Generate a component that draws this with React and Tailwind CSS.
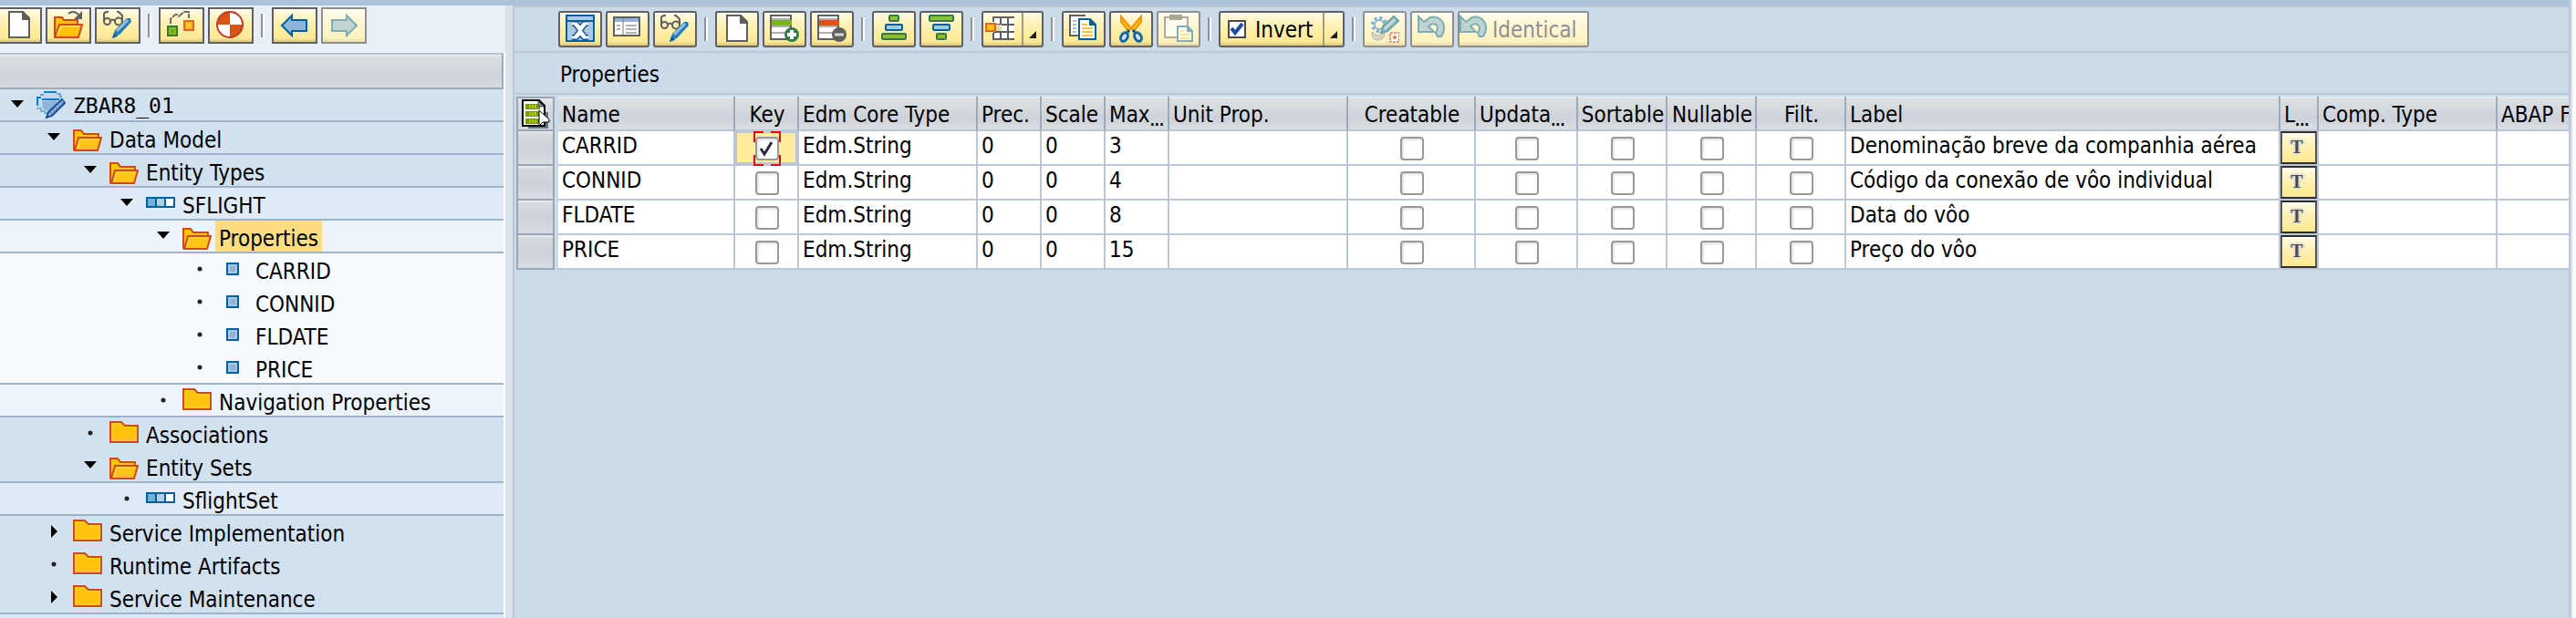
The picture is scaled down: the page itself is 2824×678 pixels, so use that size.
import React from "react";

const FONT = "font-['DejaVu_Sans_Condensed','DejaVu_Sans',sans-serif]";

/* ---------- icons ---------- */

function Icon({ children, className = "" }) {
  return (
    <svg viewBox="0 0 32 32" className={"block h-8 w-8 shrink-0 " + className} aria-hidden="true">
      {children}
    </svg>
  );
}

const NewIcon = () => (
  <Icon>
    <path d="M5 1H20L27 8V29H5Z" fill="#fff" stroke="#5f5f5f" strokeWidth="2" />
    <path d="M19 0H20L28 8V10H19Z" fill="#5f5f5f" />
  </Icon>
);

const OpenIcon = () => (
  <Icon>
    <path d="M1 29V7H9L11 10H26V14" fill="#ffc20e" stroke="#d3491b" strokeWidth="2" />
    <path d="M1 29L6 15H31L27 29Z" fill="#ffc20e" stroke="#d3491b" strokeWidth="2" />
    <path d="M4 26L8 17H28" fill="none" stroke="#ffd95a" strokeWidth="2" />
    <path d="M16 3C20 0 24 1 27 4" fill="none" stroke="#5f5f5f" strokeWidth="2" />
    <path d="M31 0V9H22Z" fill="#5f5f5f" />
  </Icon>
);

const GlassesPencilIcon = () => (
  <Icon>
    <g fill="none" stroke="#5f5f5f" strokeWidth="2">
      <circle cx="4.500" cy="11.500" r="3.500" />
      <circle cx="17" cy="11.500" r="4" />
      <path d="M8 11Q10.500 8 13 11M1 11V4Q1 1 5 1H6M21 11V5L17 1H15" />
    </g>
    <path d="M10 30L13 21L26 8H30L31 12L18 26Z" fill="#2b7cb5" />
    <path d="M15 22L27 10" stroke="#8fc0e4" strokeWidth="3" />
    <path d="M10 30L12 24L16 28Z" fill="#0e5f98" />
  </Icon>
);

const StructureIcon = () => (
  <Icon>
    <rect x="1" y="17" width="10" height="10" fill="#86bc25" stroke="#357a38" strokeWidth="2" />
    <rect x="4" y="20" width="4" height="4" fill="#6aa800" />
    <rect x="19" y="11" width="10" height="10" fill="#ffb81c" stroke="#e0662a" strokeWidth="2" />
    <rect x="22" y="14" width="4" height="4" fill="#ffcf30" />
    <path d="M4 14V9L9 4H11L13 6L19 1H24V8" fill="none" stroke="#6a6a6a" strokeWidth="2" strokeDasharray="7 1" />
  </Icon>
);

const WheelIcon = () => (
  <Icon>
    <circle cx="15" cy="15" r="14" fill="#d95514" />
    <path d="M15 15V1A14 14 0 0 1 29 15ZM15 15V29A14 14 0 0 1 1 15Z" fill="#fff" />
    <circle cx="15" cy="15" r="14" fill="none" stroke="#c0392b" strokeWidth="2" />
  </Icon>
);

const BackIcon = () => (
  <Icon>
    <path d="M2 16L13 5V10H29V22H13V27Z" fill="#8fb4d9" stroke="#00609c" strokeWidth="2" />
  </Icon>
);

const ForwardIcon = () => (
  <Icon>
    <path d="M30 16L19 5V10H3V22H19V27Z" fill="#c3d3d3" stroke="#7fadb5" strokeWidth="2" />
  </Icon>
);

const SumIcon = () => (
  <Icon>
    <rect x="1" y="1" width="30" height="28" fill="#a9cbe7" stroke="#00609c" strokeWidth="2" />
    <path d="M1 7H31" stroke="#00609c" strokeWidth="2" />
    <path d="M7 10H12L16 15L20 10H25M7 25H12L16 20L20 25H25M11 11L21 24M21 11L11 24" fill="none" stroke="#1b4f96" strokeWidth="6" />
    <path d="M7 10H12L16 15L20 10H25M7 25H12L16 20L20 25H25M11 11L21 24M21 11L11 24" fill="none" stroke="#fff" strokeWidth="3" />
  </Icon>
);

const DetailIcon = () => (
  <Icon>
    <rect x="1" y="3" width="28" height="20" fill="#fff" stroke="#5f5f5f" strokeWidth="2" />
    <rect x="2" y="4" width="26" height="4" fill="#8fb4e0" />
    <path d="M11 4V22" stroke="#777" strokeWidth="1" />
    <path d="M4 12H8M4 16H8M14 12H26M14 16H26M14 20H26" stroke="#b0b0b0" strokeWidth="2" />
  </Icon>
);

function RowIcon({ color, minus = false }) {
  return (
    <Icon>
      <path d="M1 1H23V27H1Z" fill="#fff" stroke="#5f5f5f" strokeWidth="2" />
      <path d="M1 5H23M1 13H23M1 20H23" stroke="#5f5f5f" strokeWidth="1" />
      <rect x="2" y="6" width="22" height="6" fill={color} />
      <circle cx="24" cy="22" r="7" fill={minus ? "#5f5f5f" : "#35794a"} stroke={minus ? "#5f5f5f" : "#2f7d45"} strokeWidth="2" />
      <path d={minus ? "M19 22H29" : "M19 22H29M24 17V27"} stroke={minus ? "#d5d5d5" : "#fff"} strokeWidth={minus ? 3 : 4} />
    </Icon>
  );
}

const SortUpIcon = () => (
  <Icon>
    <rect x="11" y="1" width="10" height="6" rx="1" fill="#8cc02b" stroke="#35794a" strokeWidth="2" />
    <rect x="7" y="11" width="18" height="6" rx="1" fill="#a9c6e4" stroke="#00609c" strokeWidth="2" />
    <rect x="3" y="21" width="26" height="6" rx="1" fill="#8cc02b" stroke="#35794a" strokeWidth="2" />
  </Icon>
);

const SortDownIcon = () => (
  <Icon>
    <rect x="3" y="1" width="26" height="6" rx="1" fill="#8cc02b" stroke="#35794a" strokeWidth="2" />
    <rect x="7" y="11" width="18" height="6" rx="1" fill="#a9c6e4" stroke="#00609c" strokeWidth="2" />
    <rect x="11" y="21" width="10" height="6" rx="1" fill="#8cc02b" stroke="#35794a" strokeWidth="2" />
  </Icon>
);

const LayoutIcon = () => (
  <Icon>
    <rect x="8" y="3" width="24" height="24" fill="#fff" />
    <path d="M9 8V3H32M32 27H9V20M17 3V27M25 3V27M9 11H32M9 19H32" fill="none" stroke="#5f5f5f" strokeWidth="2" />
    <rect x="10" y="11" width="8" height="7" fill="#e8d9a8" />
    <rect x="1" y="10" width="10" height="8" fill="#ffc20e" stroke="#e0662a" strokeWidth="2" />
  </Icon>
);

const CopyIcon = () => (
  <Icon>
    <path d="M18 1H1V23H10" fill="#fff" stroke="#5f5f5f" strokeWidth="2" />
    <path d="M4 7H8M4 11H8M4 15H8M4 19H8" stroke="#b8b8b8" strokeWidth="2" />
    <path d="M11 5H23L29 11V27H11Z" fill="#fff" stroke="#00609c" strokeWidth="2" />
    <path d="M22 4L30 12H22Z" fill="#00609c" />
    <path d="M14 11H20M14 15H26M14 19H26M14 23H26" stroke="#fdc82f" strokeWidth="2" />
  </Icon>
);

const CutIcon = () => (
  <Icon>
    <path d="M5 2V8L13 18L16 15ZM27 2V8L19 18L16 15Z" fill="#ffc20e" stroke="#f09010" strokeWidth="2" />
    <path d="M14 17L10 22M18 17L22 22" stroke="#00609c" strokeWidth="3" />
    <ellipse cx="8.500" cy="24.500" rx="3.500" ry="5" transform="rotate(30 8.500 24.500)" fill="#d5e6f2" stroke="#1468a4" strokeWidth="3" />
    <ellipse cx="23.500" cy="24.500" rx="3.500" ry="5" transform="rotate(-30 23.500 24.500)" fill="#d5e6f2" stroke="#1468a4" strokeWidth="3" />
  </Icon>
);

const PasteIcon = () => (
  <Icon>
    <path d="M1 3H26V25H1Z" fill="#fffdf0" stroke="#b2ac9c" strokeWidth="2" />
    <rect x="6" y="0" width="14" height="6" fill="#aaa695" />
    <path d="M15 13H26L31 18V29H15Z" fill="#fffbe6" stroke="#7fadb5" strokeWidth="2" />
    <path d="M25 12L32 19H25Z" fill="#7fadb5" />
    <path d="M18 18H22M18 22H28M18 26H28" stroke="#fce38f" strokeWidth="2" />
  </Icon>
);

const InvertIcon = () => (
  <svg viewBox="0 0 20 20" className="block h-5 w-5 shrink-0" aria-hidden="true">
    <rect x="1" y="1" width="18" height="18" fill="#fff" stroke="#4a4a4a" strokeWidth="2" />
    <path d="M4 9L8 14L16 4" fill="none" stroke="#1d4fa0" strokeWidth="4" />
  </svg>
);

const DropIcon = () => (
  <svg viewBox="0 0 8 8" className="mt-3 block h-2 w-2" aria-hidden="true">
    <path d="M8 0V8H0Z" fill="#1d1d26" />
  </svg>
);

const GearPencilIcon = () => (
  <Icon>
    <circle cx="10" cy="11" r="7" fill="none" stroke="#7ab0cc" strokeWidth="4" strokeDasharray="3 2.500" />
    <circle cx="10" cy="11" r="5" fill="none" stroke="#8bbacb" strokeWidth="2" />
    <path d="M2 19Q8 26 16 20Q16 28 8 28Q1 28 2 19Z" fill="#d6d3c0" stroke="#b8b5a4" strokeWidth="1" />
    <path d="M12 20L14 13L26 2L31 7L19 18Z" fill="#9ec3c6" stroke="#6ba3ad" strokeWidth="2" />
    <path d="M16 16L27 5" stroke="#c8dcd8" strokeWidth="2" />
    <rect x="22" y="20" width="10" height="10" fill="#fff" stroke="#e89878" strokeWidth="2" strokeDasharray="3 1" />
    <path d="M27 23V27M25 25H29" stroke="#e07858" strokeWidth="2" />
  </Icon>
);

const UndoIcon = () => (
  <Icon>
    <path d="M1 2V19H18L12 13Q16 9 20 11Q24 14 20 20L22 24H26Q31 17 28 9Q23 1 14 3L7 8Z" fill="#bfd3d0" stroke="#7fadb5" strokeWidth="2" />
  </Icon>
);

const FolderOpen = () => (
  <svg viewBox="0 0 32 24" className="mt-2 block h-6 w-8" aria-hidden="true">
    <path d="M1 23V1H9L12 5H28V9" fill="#ffc20e" stroke="#cf4a1c" strokeWidth="2" />
    <path d="M2 23L6 9H31L27 23Z" fill="#ffc516" stroke="#cf4a1c" strokeWidth="2" />
    <path d="M5 21L8 11H28" fill="none" stroke="#ffdc66" strokeWidth="1" />
  </svg>
);

const FolderClosed = () => (
  <svg viewBox="0 0 32 24" className="mt-1 block h-6 w-8" aria-hidden="true">
    <path d="M1 23V1H13L17 5H31V23Z" fill="#ffc20e" stroke="#cf4a1c" strokeWidth="2" />
    <path d="M3 21V3H12L16 7H29V21Z" fill="none" stroke="#ffd23c" strokeWidth="1" />
  </svg>
);

const EntityIcon = () => (
  <svg viewBox="0 0 32 12" className="mt-2.5 block h-3 w-8" aria-hidden="true">
    <rect x="1" y="1" width="10" height="10" fill="#6db0d8" />
    <rect x="11" y="1" width="10" height="10" fill="#b4cde6" />
    <rect x="21" y="1" width="10" height="10" fill="#fff" />
    <path d="M1 1H31V11H1ZM11 1V11M21 1V11" fill="none" stroke="#00609c" strokeWidth="2" />
  </svg>
);

const FieldIcon = () => (
  <svg viewBox="0 0 14 14" className="mt-2.5 ml-2 block h-3.5 w-3.5" aria-hidden="true">
    <rect x="1" y="1" width="12" height="12" fill="#abc6e2" stroke="#00609c" strokeWidth="2" />
    <rect x="4" y="4" width="6" height="6" fill="#8fb2d8" />
  </svg>
);

const ServiceIcon = () => (
  <svg viewBox="0 0 32 32" className="mt-0.5 block h-8 w-8" aria-hidden="true">
    <path d="M2 7L6 3Q14 0 24 3L28 7L27 12L14 25L6 22L2 17Z" fill="#c3daee" />
    <path d="M6 11L22 10L23 13L13 22L7 19Z" fill="#8fb4dc" />
    <path d="M1 16V7H5" fill="none" stroke="#0a83c6" strokeWidth="2" />
    <path d="M1 18V19H5V22H9V24H12" fill="none" stroke="#7fb3cc" strokeWidth="2" />
    <path d="M8 1H22M6 9H25" fill="none" stroke="#0a83c6" strokeWidth="2" />
    <path d="M4 4H8M22 3H26V6H28" fill="none" stroke="#6fa9c8" strokeWidth="2" />
    <path d="M11 29L13 23L28 9L31 13L17 27Z" fill="#6a94c8" stroke="#1b4f96" strokeWidth="2" />
    <path d="M14 26L29 11" stroke="#a8c4e4" strokeWidth="2" strokeDasharray="2 2" />
  </svg>
);

const SelectAllIcon = () => (
  <svg viewBox="0 0 32 32" className="block h-8 w-8" aria-hidden="true">
    <path d="M28 14V30H8" fill="none" stroke="#5e7488" strokeWidth="4" />
    <path d="M2 1H20L26 7V29H2Z" fill="#fff" stroke="#000" strokeWidth="2" />
    <rect x="5" y="5" width="16" height="6" fill="#7a9a00" />
    <rect x="5" y="13" width="16" height="6" fill="#7a9a00" />
    <rect x="5" y="21" width="16" height="6" fill="#7a9a00" />
    <path d="M9 8H17M9 16H17M9 24H17" stroke="#a5cc14" strokeWidth="4" strokeDasharray="2 1" />
    <path d="M19 2V8H25Z" fill="#7c8a96" stroke="#4a5560" strokeWidth="1" />
    <path d="M20 12V29L24 25H31V22Z" fill="#fff" stroke="#000" strokeWidth="1" />
  </svg>
);

/* ---------- toolbars ---------- */

const BTN_FILL =
  "bg-[linear-gradient(to_bottom,#fffdf0_0px,#fff6cc_6px,#fff0b0_16px,#ffec9a_26px,#fbe896_32px,#d5c67e_36px)]";
const BTN_FILL_OFF =
  "bg-[linear-gradient(to_bottom,#fffef6_0px,#fffae0_6px,#fff6d2_16px,#fff3c4_26px,#fdf2c2_32px,#e2d9a8_36px)]";

function ToolButton({ label, off = false, wide = false, children }) {
  return (
    <button
      type="button"
      aria-label={label}
      disabled={off}
      className={
        "flex h-10 shrink-0 items-center justify-center border-2 " +
        (wide ? "w-[50px] " : "w-12 rounded-[3px] ") +
        (off ? "border-[#8f8f8f] " + BTN_FILL_OFF : "border-[#5f5f64] " + BTN_FILL)
      }
    >
      {children}
    </button>
  );
}

const Sep = () => (
  <span className="mx-1 h-[26px] w-1 shrink-0 border-r-2 border-l-2 border-l-[#8f9298] border-r-white" />
);

function LeftToolbar() {
  return (
    <div className="flex h-[52px] items-start gap-1 overflow-hidden bg-[#e8eff6] pt-0.5">
      <div className="-ml-1">
        <ToolButton wide label="New"><NewIcon /></ToolButton>
      </div>
      <ToolButton wide label="Open"><OpenIcon /></ToolButton>
      <ToolButton wide label="Display or change"><GlassesPencilIcon /></ToolButton>
      <span className="flex h-10 items-center"><Sep /></span>
      <ToolButton wide label="Structure"><StructureIcon /></ToolButton>
      <ToolButton wide label="Generate"><WheelIcon /></ToolButton>
      <span className="flex h-10 items-center"><Sep /></span>
      <ToolButton wide label="Back"><BackIcon /></ToolButton>
      <ToolButton wide off label="Forward"><ForwardIcon /></ToolButton>
    </div>
  );
}

function RightToolbar() {
  return (
    <div className="flex h-[52px] items-center gap-1 border-y-2 border-[#bcc8d6] pl-12">
      <ToolButton label="Totals"><SumIcon /></ToolButton>
      <ToolButton label="Details"><DetailIcon /></ToolButton>
      <ToolButton label="Display or change"><GlassesPencilIcon /></ToolButton>
      <Sep />
      <ToolButton label="Create"><NewIcon /></ToolButton>
      <ToolButton label="Insert row"><RowIcon color="#7ab51d" /></ToolButton>
      <ToolButton label="Delete row"><RowIcon color="#d95514" minus /></ToolButton>
      <Sep />
      <ToolButton label="Sort ascending"><SortUpIcon /></ToolButton>
      <ToolButton label="Sort descending"><SortDownIcon /></ToolButton>
      <Sep />
      <button
        type="button"
        aria-label="Choose layout"
        className={"flex h-10 w-[68px] shrink-0 items-center rounded-[3px] border-2 border-[#5f5f64] pl-0.5 " + BTN_FILL}
      >
        <LayoutIcon />
        <span className="ml-2 flex h-full flex-1 items-center justify-center border-l-2 border-[#a39c78]">
          <DropIcon />
        </span>
      </button>
      <Sep />
      <ToolButton label="Copy"><CopyIcon /></ToolButton>
      <ToolButton label="Cut"><CutIcon /></ToolButton>
      <ToolButton off label="Paste"><PasteIcon /></ToolButton>
      <Sep />
      <button
        type="button"
        className={"flex h-10 w-[138px] shrink-0 items-center rounded-[3px] border-2 border-[#5f5f64] pl-2 " + BTN_FILL}
      >
        <InvertIcon />
        <span className="ml-2.5 pt-0.5 leading-9">Invert</span>
        <span className="ml-auto flex h-full w-[22px] items-center justify-center border-l-2 border-[#a39c78]">
          <DropIcon />
        </span>
      </button>
      <Sep />
      <ToolButton off label="Adjust"><GearPencilIcon /></ToolButton>
      <ToolButton off label="Undo"><UndoIcon /></ToolButton>
      <button
        type="button"
        disabled
        className={"flex h-10 w-36 shrink-0 items-center rounded-[3px] border-2 border-[#8f8f8f] text-[#8f8f98] " + BTN_FILL_OFF}
      >
        <UndoIcon />
        <span className="ml-1 pt-0.5 leading-9">Identical</span>
      </button>
    </div>
  );
}

/* ---------- tree ---------- */

const TREE = [
  { level: 0, state: "open", icon: "service", text: "ZBAR8_01", mono: true, line: true },
  { level: 1, state: "open", icon: "open", text: "Data Model", line: true },
  { level: 2, state: "open", icon: "open", text: "Entity Types", line: true },
  { level: 3, state: "open", icon: "entity", text: "SFLIGHT", line: true },
  { level: 4, state: "open", icon: "open", text: "Properties", line: true, selected: true },
  { level: 5, state: "leaf", icon: "field", text: "CARRID" },
  { level: 5, state: "leaf", icon: "field", text: "CONNID" },
  { level: 5, state: "leaf", icon: "field", text: "FLDATE" },
  { level: 5, state: "leaf", icon: "field", text: "PRICE", line: true },
  { level: 4, state: "leaf", icon: "closed", text: "Navigation Properties", line: true },
  { level: 2, state: "leaf", icon: "closed", text: "Associations" },
  { level: 2, state: "open", icon: "open", text: "Entity Sets", line: true },
  { level: 3, state: "leaf", icon: "entity", text: "SflightSet", line: true },
  { level: 1, state: "closed", icon: "closed", text: "Service Implementation" },
  { level: 1, state: "leaf", icon: "closed", text: "Runtime Artifacts" },
  { level: 1, state: "closed", icon: "closed", text: "Service Maintenance", line: true },
];

const INDENT = ["pl-0", "pl-10", "pl-20", "pl-[120px]", "pl-40", "pl-[200px]"];
const LEVEL_BG = ["bg-[#d2e1f0]", "bg-[#d2e1f0]", "bg-[#d2e1f0]", "bg-[#e1ebf7]", "bg-[#ecf3fb]", "bg-[#f7faff]"];
const TREE_ICONS = {
  service: ServiceIcon,
  open: FolderOpen,
  closed: FolderClosed,
  entity: EntityIcon,
  field: FieldIcon,
};

function Expander({ state }) {
  return (
    <svg viewBox="0 0 40 36" className="block h-9 w-10 shrink-0" aria-hidden="true">
      {state === "open" && <path d="M12 12H26L19 20Z" fill="#000" />}
      {state === "closed" && <path d="M16 10V24L23 17Z" fill="#000" />}
      {state === "leaf" && <circle cx="19" cy="17" r="2.500" fill="#222" />}
    </svg>
  );
}

function TreeRow({ row }) {
  const Glyph = TREE_ICONS[row.icon];
  return (
    <li
      className={
        "flex h-9 items-start overflow-hidden border-b-2 " +
        INDENT[row.level] + " " + LEVEL_BG[row.level] + " " +
        (row.line ? "border-[#9fb3c8]" : "border-transparent")
      }
    >
      <Expander state={row.state} />
      <span className="w-9 shrink-0"><Glyph /></span>
      <span
        className={
          "h-[34px] px-1 pt-0.5 whitespace-nowrap " +
          (row.mono ? "font-['DejaVu_Sans_Mono',monospace] text-[23px] leading-8 " : "leading-9 ") +
          (row.selected ? "bg-[#fddc82]" : "")
        }
      >
        {row.text}
      </span>
    </li>
  );
}

function TreePanel() {
  return (
    <aside className="flex w-[554px] shrink-0 flex-col bg-[#dae6f3]">
      <LeftToolbar />
      <div className="flex-1 border-r-2 border-white">
        <div className="h-10 border-t-2 border-r-2 border-b-2 border-t-[#b9c5d2] border-r-[#9dabb9] border-b-[#9dabb9] bg-[linear-gradient(to_bottom,#eef0f2_0px,#d9dde0_3px,#d3d9dc_16px,#cdd2dc_20px,#d0d5dd_28px,#d9dde2_36px)]" />
        <ul>
          {TREE.map((row) => (
            <TreeRow key={row.text} row={row} />
          ))}
        </ul>
      </div>
    </aside>
  );
}

/* ---------- table ---------- */

const HEAD_FILL =
  "bg-[linear-gradient(to_bottom,#eef0f2_0px,#e0e3e6_2px,#d8dde1_6px,#d3d9dc_16px,#cdd2dc_22px,#d0d6dc_28px,#dadfe4_36px)]";

const COLUMNS = [
  { name: "Name", w: "w-[194px]" },
  { name: "Key", w: "w-[70px]", box: true },
  { name: "Edm Core Type", w: "w-[196px]" },
  { name: "Prec.", w: "w-[70px]" },
  { name: "Scale", w: "w-[70px]" },
  { name: "Max", w: "w-[70px]", cut: true },
  { name: "Unit Prop.", w: "w-[196px]" },
  { name: "Creatable", w: "w-[140px]", box: true },
  { name: "Updata", w: "w-[112px]", cut: true, box: true },
  { name: "Sortable", w: "w-[98px]", box: true },
  { name: "Nullable", w: "w-[98px]", box: true },
  { name: "Filt.", w: "w-[98px]", box: true },
  { name: "Label", w: "w-[476px]" },
  { name: "L", w: "w-[42px]", cut: true },
  { name: "Comp. Type", w: "w-[196px]" },
  { name: "ABAP F", w: "" },
];

const ROWS = [
  { name: "CARRID", key: true, max: "3", label: "Denominação breve da companhia aérea" },
  { name: "CONNID", key: false, max: "4", label: "Código da conexão de vôo individual" },
  { name: "FLDATE", key: false, max: "8", label: "Data do vôo" },
  { name: "PRICE", key: false, max: "15", label: "Preço do vôo" },
];

function Cell({ children }) {
  return (
    <td className="overflow-hidden border-r-2 border-b-2 border-[#bcc7d6] bg-white p-0 pl-1 align-top leading-8 whitespace-nowrap last:border-r-0">
      {children}
    </td>
  );
}

function BoxCell({ label, checked = false, active = false }) {
  return (
    <td className={"border-r-2 border-b-2 border-[#bcc7d6] p-0 align-top " + (active ? "bg-[#ffed9e] shadow-[inset_0_0_0_2px_#bcc7d6]" : "bg-white")}>
      <div className="relative flex h-9 justify-center pt-1.5 pl-0.5">
        <input
          type="checkbox"
          aria-label={label}
          defaultChecked={checked}
          className="h-[26px] w-[26px] appearance-none rounded-[4px] border-2 border-[#979999] bg-white shadow-[inset_2px_2px_2px_#e4e4e6]"
        />
        {active && (
          <svg viewBox="0 0 30 38" className="pointer-events-none absolute top-0 h-[38px] w-[30px]" aria-hidden="true">
            <path d="M1 12V1H11M19 1H29V12M29 26V37H19M11 37H1V26" fill="none" stroke="#e30613" strokeWidth="2" />
            <path d="M8 19L12 25L20 12" fill="none" stroke="#2e2a45" strokeWidth="3" />
          </svg>
        )}
      </div>
    </td>
  );
}

function PropertyTable() {
  return (
    <table className="w-full table-fixed border-separate border-spacing-0">
      <colgroup>
        <col className="w-[46px]" />
        {COLUMNS.map((c) => (
          <col key={c.name} className={c.w} />
        ))}
      </colgroup>
      <thead>
        <tr className="h-[38px]">
          <th className="p-0 pr-1">
            <button
              type="button"
              aria-label="Select all"
              className={"flex h-[38px] w-full items-center justify-center border-2 border-[#9aa6b5] " + HEAD_FILL}
            >
              <SelectAllIcon />
            </button>
          </th>
          {COLUMNS.map((c) => (
            <th
              key={c.name}
              className={
                "overflow-hidden border-r-2 border-b-2 border-r-[#9eaab8] border-b-[#bcc7d6] p-0 pt-0.5 align-top leading-9 font-normal whitespace-nowrap last:border-r-0 " +
                HEAD_FILL + (c.box && !c.cut ? " pl-0.5 text-center" : " pl-1 text-left")
              }
            >
              <span className="block h-[34px]">
                {c.name}
                {c.cut && <sub className="text-[15px] leading-none font-bold">...</sub>}
              </span>
            </th>
          ))}
        </tr>
      </thead>
      <tbody>
        {ROWS.map((r, i) => (
          <tr key={r.name} className="h-[38px]">
            <td className="p-0 pr-1">
              <button
                type="button"
                aria-label={"Select row " + r.name}
                className="block h-[38px] w-full border-x-2 border-b-2 border-[#9aa6b5] bg-[linear-gradient(to_bottom,#e8eaee_0px,#d4d9de_4px,#cdd2da_20px,#d9dde3_36px)]"
              />
            </td>
            <Cell>{r.name}</Cell>
            <BoxCell label={"Key " + r.name} checked={r.key} active={i === 0} />
            <Cell>Edm.String</Cell>
            <Cell>0</Cell>
            <Cell>0</Cell>
            <Cell>{r.max}</Cell>
            <Cell />
            <BoxCell label={"Creatable " + r.name} />
            <BoxCell label={"Updatable " + r.name} />
            <BoxCell label={"Sortable " + r.name} />
            <BoxCell label={"Nullable " + r.name} />
            <BoxCell label={"Filterable " + r.name} />
            <Cell>{r.label}</Cell>
            <td className="border-r-2 border-b-2 border-[#bcc7d6] p-0">
              <button
                type="button"
                aria-label={"Text " + r.name}
                className={"flex h-9 w-full items-center justify-center border-2 border-x-[#55555a] border-y-[#2e2e30] pr-1 pb-0.5 font-['Liberation_Serif',serif] text-[20px] leading-6 font-bold text-[#4a4a4a] [text-shadow:-2px_0_#dcdcdc,2px_0_#dcdcdc,0_2px_#dcdcdc,0_-2px_#dcdcdc] " + BTN_FILL}
              >
                T
              </button>
            </td>
            <Cell />
            <Cell />
          </tr>
        ))}
      </tbody>
    </table>
  );
}

/* ---------- page ---------- */

export default function App() {
  return (
    <div className={"flex min-h-screen bg-white pr-1 text-[24px] text-black " + FONT}>
      <div className="flex min-w-0 flex-1 flex-col border-r-2 border-[#d9dfe9]">
        <div className="h-1.5 bg-[#adc3dc]" />
        <div className="flex min-w-0 flex-1">
          <TreePanel />
          <div className="w-2 shrink-0 bg-[#d9e4ea]" />
          <main className="min-w-0 flex-1 overflow-hidden border-x-2 border-[#bcc8d6] bg-[#cbdbea]">
            <RightToolbar />
            <h2 className="h-[46px] border-b-2 border-[#bcc8d6] pt-1.5 pl-[50px] leading-9">Properties</h2>
            <div className="pt-0.5 pl-0.5">
              <PropertyTable />
            </div>
          </main>
        </div>
      </div>
    </div>
  );
}
